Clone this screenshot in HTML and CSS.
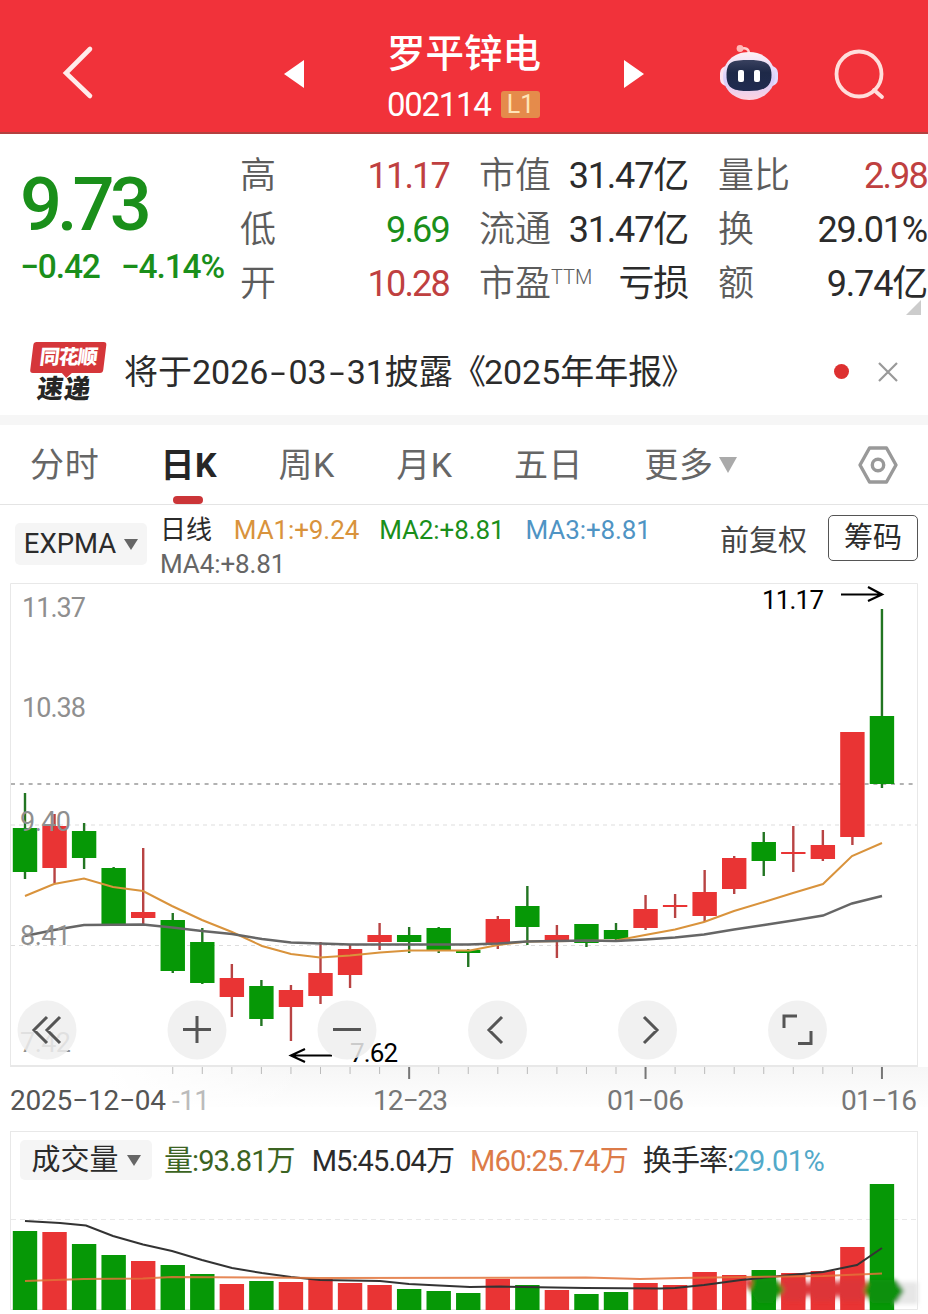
FILE: index.html
```html
<!DOCTYPE html>
<html lang="zh-CN">
<head>
<meta charset="utf-8">
<title>罗平锌电 002114</title>
<link rel="stylesheet" href="styles.css">
</head>
<body>
<header class="topbar">
  <svg class="back" width="34" height="56" viewBox="0 0 34 56"><path d="M30 4 6 28 30 51" fill="none" stroke="#ffeceb" stroke-width="4.6" stroke-linecap="round" stroke-linejoin="miter"/></svg>
  <svg class="prev" width="20" height="30" viewBox="0 0 20 30"><path d="M20 1V29L0 15Z" fill="#fff"/></svg>
  <div class="stock">
    <h1 class="stock-name">罗平锌电</h1>
    <div class="stock-code"><span class="code">002114</span><span class="level">L1</span></div>
  </div>
  <svg class="next" width="20" height="30" viewBox="0 0 20 30"><path d="M0 1V29L20 15Z" fill="#fff"/></svg>
  <svg class="robot" width="60" height="56" viewBox="0 0 60 56">
    <defs><linearGradient id="shell" x2="0" y2="1"><stop offset="0" stop-color="#fff0f4"/><stop offset=".6" stop-color="#d8cdfb"/><stop offset="1" stop-color="#ffd3df"/></linearGradient>
    <linearGradient id="visor" x2="0" y2="1"><stop offset="0" stop-color="#39415f"/><stop offset=".4" stop-color="#1e2948"/><stop offset="1" stop-color="#202b50"/></linearGradient></defs>
    <path d="M30 10C30 5 27 3 21 5" fill="none" stroke="#ffd0cf" stroke-width="2.4"/><circle cx="21" cy="4.500" r="3.400" fill="#ffb9b8"/>
    <rect x="1" y="22" width="14" height="20" rx="7" fill="#fbe3f0"/><rect x="45" y="22" width="14" height="20" rx="7" fill="#e2dcff"/>
    <path d="M30 8C46 8 56 19 56 32S45 56 30 56 4 45 4 32 14 8 30 8Z" fill="url(#shell)"/>
    <path d="M30 16C46 16 52.500 19 52.500 31S45 47 30 47 7.500 45 7.500 31 14 16 30 16Z" fill="url(#visor)"/>
    <rect x="19" y="26" width="6" height="12" rx="2" fill="#fff"/><rect x="35" y="26" width="6" height="12" rx="2" fill="#fff"/>
  </svg>
  <svg class="search" width="52" height="52" viewBox="0 0 52 52"><g fill="none" stroke="#ffdedb" stroke-width="3.8" stroke-linecap="round"><circle cx="25" cy="25" r="22.5"/><path d="M40 41 48 48"/></g></svg>
</header>

<section class="quote">
  <div class="price-box">
    <div class="price">9.73</div>
    <div class="change"><span>−0.42</span><span class="pct">−4.14%</span></div>
  </div>
  <dl class="stats">
    <div><dt>高</dt><dd class="up">11.17</dd></div>
    <div><dt>低</dt><dd class="down">9.69</dd></div>
    <div><dt>开</dt><dd class="up">10.28</dd></div>
  </dl>
  <dl class="stats">
    <div><dt>市值</dt><dd>31.47亿</dd></div>
    <div><dt>流通</dt><dd>31.47亿</dd></div>
    <div><dt>市盈<small>TTM</small></dt><dd>亏损</dd></div>
  </dl>
  <dl class="stats">
    <div><dt>量比</dt><dd class="up">2.98</dd></div>
    <div><dt>换</dt><dd>29.01%</dd></div>
    <div><dt>额</dt><dd>9.74亿</dd></div>
  </dl>
  <i class="corner"></i>
</section>

<section class="news">
  <div class="news-logo"><span class="logo-top">同花顺</span><span class="logo-bottom">速递</span></div>
  <p class="news-text">将于2026<i class="dash">-</i>03<i class="dash">-</i>31披露<span class="title-mark">《</span>2025年年报<span class="title-mark">》</span></p>
  <i class="news-dot"></i>
  <svg class="news-close" width="22" height="22" viewBox="0 0 22 22"><path d="M2 2 20 20M20 2 2 20" stroke="#999" stroke-width="2.2"/></svg>
</section>

<nav class="tabs">
  <a>分时</a><a class="active">日K</a><a>周K</a><a>月K</a><a>五日</a><a>更多<svg width="18" height="16" viewBox="0 0 18 16"><path d="M0 0H18L9 16Z" fill="#aaa"/></svg></a>
  <svg class="gear" width="40" height="40" viewBox="0 0 40 40"><g fill="none" stroke="#999" stroke-width="3.4" stroke-linejoin="round"><path d="M11.5 3H28.5L38 20 28.5 37H11.5L2 20Z"/><circle cx="20" cy="20" r="5.7"/></g></svg>
</nav>

<section class="indicator">
  <button class="pick">EXPMA<i class="caret"></i></button>
  <div class="ma">
    <div class="ma-row"><span class="line-name">日线</span><span class="ma1">MA1:+9.24</span><span class="ma2">MA2:+8.81</span><span class="ma3">MA3:+8.81</span></div>
    <div class="ma-row ma4">MA4:+8.81</div>
  </div>
  <span class="adjust">前复权</span>
  <button class="chips">筹码</button>
</section>

<svg class="kline" width="928" height="548" viewBox="0 583 928 548">
  <defs><linearGradient id="fade" x2="0" y2="1"><stop offset="0" stop-color="#f6f6f6"/><stop offset="1" stop-color="#fefefe"/></linearGradient>
  <linearGradient id="fade-in"><stop offset="0" stop-color="#fff"/><stop offset="1" stop-color="#fff" stop-opacity="0"/></linearGradient></defs>
  <rect x="110" y="1067" width="818" height="40" fill="url(#fade)"/>
  <rect x="108" y="1067" width="200" height="42" fill="url(#fade-in)"/>
  <g class="frame"><path d="M10.500 1066V583.500H917.500V1066"/><path d="M10 1066H918" stroke-width="2"/></g>
  <g class="grid"><path d="M11 825H917M11 945.500H917"/></g>
  <path d="M11 784H917" stroke="#999" stroke-width="1.500" stroke-dasharray="4 4.800"/>
  <g id="candles"></g>
  <polyline fill="none" stroke="#d9933c" stroke-width="2" points="25,896 54,884 84,878.500 113,887 143,891 172,906 202,920 232,932 262,946 291,954 320,957.500 350,955.500 380,952.500 409,950.500 470,950.500 498,945 527,941.500 616,940.500 645,935 675,929.500 704,922 734,911 764,902 793,893 823,884 852,856 882,843"/>
  <polyline fill="none" stroke="#666" stroke-width="2.400" points="25,936 54,930 84,925 143,924.500 172,927.500 202,931 232,934 262,939 291,942.500 320,943.500 350,944.500 468,944.500 498,943.500 527,941.500 586,940.500 616,941 645,939.500 675,937.500 704,934.500 734,929.500 764,925 793,920.500 823,915.500 852,903.500 882,896"/>
  <g class="scale">
    <text x="22" y="617" textLength="64">11.37</text><text x="22" y="717" textLength="64">10.38</text>
    <text x="20" y="831" textLength="51">9.40</text><text x="20" y="945" textLength="51">8.41</text>
    <text x="20" y="1052" textLength="51">7.42</text>
  </g>
  <g class="marks">
    <text x="762" y="609" textLength="62">11.17</text><text x="350" y="1062" textLength="48">7.62</text>
    <path d="M841 594.500H882M868 587 882 594.500 868 601M332 1055.500H291M305 1049 291 1055.500 305 1062"/>
  </g>
  <g class="controls">
    <circle cx="47" cy="1030" r="29.500"/><circle cx="197" cy="1030" r="29.500"/><circle cx="347" cy="1030" r="29.500"/><circle cx="497.500" cy="1030" r="29.500"/><circle cx="647.500" cy="1030" r="29.500"/><circle cx="797.500" cy="1030" r="29.500"/>
    <path d="M47 1017 34 1030 47 1043M60 1017 47 1030 60 1043M183 1029.500H211M197 1016V1043M333 1029.500H361M502 1017 489 1030 502 1043M644 1017 657 1030 644 1043M784 1028V1016H797M811 1031V1043.500H798"/>
  </g>
  <g id="ticks"></g>
  <g class="dates">
    <text x="10" y="1110" textLength="156" fill="#555">2025−12−04</text><text x="172" y="1110" textLength="38" fill="#bbb">-11</text>
    <text x="373" y="1110" textLength="75">12−23</text><text x="607" y="1110" textLength="77">01−06</text><text x="841" y="1110" textLength="76">01−16</text>
  </g>
</svg>

<section class="volume">
  <div class="vol-head">
    <button class="pick vol-pick">成交量<i class="caret"></i></button>
    <span class="v1">量:93.81万</span><span class="v5">M5:45.04万</span><span class="v60">M60:25.74万</span><span class="turn">换手率:<b>29.01%</b></span>
  </div>
  <svg class="bars" width="928" height="131" viewBox="0 1183 928 131">
    <defs><filter id="soft" x="-10%" y="-30%" width="120%" height="160%"><feGaussianBlur stdDeviation="2"/></filter></defs>
    <path d="M10.500 1183V1309.500H917.500V1183" fill="none" stroke="#e8e8e8"/>
    <path d="M11 1219.500H917" stroke="#e8e8e8" stroke-dasharray="5 4"/>
    <g id="vols"></g>
    <g filter="url(#soft)">
      <path d="M895 1282H918V1304H895Z" fill="#e6e6e6"/>
      <g fill="#dd3639"><path d="M744 1279H758L748 1291Z"/><path d="M784 1279H804L812 1290 802 1301H786L776 1290Z"/><path d="M812 1279H834L842 1290 832 1301H814L806 1290Z"/><path d="M840 1279H864L870 1290 862 1301H842L835 1290Z"/></g>
      <path d="M753 1279H776L784 1290 772 1303H758L750 1290Z" fill="#109010"/>
      <path d="M869 1280H896L904 1291 896 1303H872L864 1291Z" fill="#109010"/>
    </g>
    <polyline fill="none" stroke="#333" stroke-width="2" points="25,1221 60,1223 86,1225.500 113,1236 143,1244.500 172,1251 202,1260 232,1268 262,1273 291,1277 320,1280 380,1281 409,1284 439,1285.500 470,1287 500,1286.500 586,1288 660,1288.500 675,1288 704,1285 741,1280 780,1276 823,1272 852,1266 857,1265 882,1248"/>
    <polyline fill="none" stroke="#e2733a" stroke-opacity=".85" stroke-width="2" points="25,1281 84,1279 143,1278.500 172,1277 320,1278 586,1277.500 640,1279 680,1278 823,1276 882,1273.500"/>
  </svg>
</section>
<script src="chart.js"></script>
</body>
</html>
```
FILE: styles.css
```css
* { box-sizing: border-box; }
body { margin: 0; width: 928px; height: 1314px; overflow: hidden; background: #fff; color: #2b2b2b; font-family: Roboto, "Noto Sans CJK SC", sans-serif; }
svg { display: block; flex: none; }
h1, dl, dd, p { margin: 0; }
i { font-style: normal; }
button { border: 0; padding: 0; font: inherit; color: inherit; }

.topbar { height: 134px; display: flex; align-items: flex-start; background: #f1323a; border-bottom: 2px solid #b34140; color: #fff; }
.back { margin: 45px 0 0 60px; }
.prev { margin: 59px 0 0 190px; }
.stock { width: 157px; margin: 29px 0 0 83px; }
.stock-name { font-size: 38.5px; font-weight: 500; line-height: 50px; white-space: nowrap; }
.stock-code { display: flex; align-items: center; height: 50px; }
.code { width: 105px; padding-top: 2px; font-size: 33px; letter-spacing: -1.3px; line-height: 50px; }
.level { width: 39px; height: 27px; margin-left: 9px; border-radius: 3px; background: #e58b4b; color: #ffe4b8; font-size: 25px; line-height: 28px; text-align: center; }
.next { margin: 59px 0 0 80px; }
.robot { margin: 44px 0 0 75px; }
.search { margin: 49px 0 0 55px; }

.quote { position: relative; height: 194px; padding: 15px 0 0 20px; display: flex; }
.price-box { width: 220px; color: #1a8f1a; }
.price { margin-top: 16px; font-size: 74px; font-weight: 500; line-height: 80px; letter-spacing: -5px; }
.change { display: flex; font-size: 33.5px; font-weight: 500; line-height: 44px; letter-spacing: -1.1px; white-space: nowrap; }
.pct { margin-left: 21px; }
.stats { width: 209px; margin-right: 30px; }
.stats:last-of-type { margin-right: 0; }
.stats > div { height: 54px; display: flex; justify-content: space-between; line-height: 54px; white-space: nowrap; }
.stats dt { font-size: 36px; font-weight: 350; color: #5c5c5c; }
.stats small { font-size: 20px; line-height: 1; position: relative; top: -12px; }
.stats dd { font-size: 36px; letter-spacing: -1.2px; }
.stats .up, .stats .down { letter-spacing: -1.8px; }
.stats .up { color: #bf4040; }
.stats .down { color: #1a8f1a; }
.corner { position: absolute; right: 7px; bottom: 13px; border-left: 15px solid transparent; border-bottom: 15px solid #ccc; }

.news { height: 87px; display: flex; align-items: center; padding-left: 30px; }
.news-logo { width: 73px; height: 60px; transform: skewX(-7deg); font-weight: 900; text-align: center; }
.logo-top { position: relative; display: block; height: 31px; background: #d5363a; border-radius: 3px; color: #fff; font-size: 20px; line-height: 31px; letter-spacing: -1px; }
.logo-top::after { content: ""; position: absolute; left: 32px; top: 31px; border: 5px solid transparent; border-top-color: #d5363a; border-bottom: 0; }
.logo-bottom { display: block; color: #262626; font-size: 26px; line-height: 32px; letter-spacing: 1px; }
.news-text { width: 711px; padding-left: 21px; font-size: 34px; line-height: 50px; white-space: nowrap; }
.dash { display: inline-block; width: 20px; text-align: center; transform: scaleX(1.6); }
.title-mark { letter-spacing: -2px; margin-left: -1px; }
.news-dot { width: 15px; height: 15px; margin-left: 20px; border-radius: 50%; background: #dd3030; }
.news-close { margin-left: 28px; }

.tabs { height: 90px; border-top: 10px solid #f6f6f6; border-bottom: 1px solid #e4e4e4; display: flex; align-items: center; padding-left: 30px; font-size: 34px; letter-spacing: .7px; color: #666; }
.tabs a { position: relative; display: flex; align-items: center; height: 79px; padding-top: 2px; margin-right: 61px; line-height: 77px; white-space: nowrap; }
.tabs a svg { margin-left: 5px; margin-top: -2px; }
.tabs .active { font-weight: 700; color: #262626; }
.active::after { content: ""; position: absolute; left: 13px; bottom: 0; width: 30px; height: 8px; border-radius: 4px; background: #cb3538; }
.tabs .gear { margin-left: 60px; }

.indicator { height: 78px; display: flex; padding-left: 15px; }
.pick { width: 132px; height: 42px; margin-top: 18px; display: flex; align-items: center; justify-content: center; gap: 8px; border-radius: 5px; background: #f5f5f5; font-size: 27.5px; line-height: 44px; white-space: nowrap; }
.caret { border: 7.5px solid transparent; border-top: 11px solid #666; border-bottom: 0; }
.ma { width: 560px; margin: 8px 0 0 13px; font-size: 26px; line-height: 34px; }
.ma-row { display: flex; white-space: nowrap; letter-spacing: -.1px; }
.ma1 { margin-left: 22px; color: #d9933c; }
.ma2 { margin-left: 20px; color: #1a8f1a; }
.ma3 { margin-left: 21px; color: #4f94c4; }
.ma4 { color: #666; }
.adjust { width: 108px; margin-top: 11px; font-size: 29px; line-height: 50px; color: #444; }
.chips { width: 90px; height: 46px; margin-top: 10px; border: 1.5px solid #555; border-radius: 5px; background: #fff; font-size: 29px; line-height: 45px; }

.frame { fill: none; stroke: #e8e8e8; }
.grid { stroke: #ddd; stroke-dasharray: 4 4; }
.scale { font-size: 27px; fill: #8f8f8f; }
.marks { font-size: 26px; fill: #000; }
.marks path { fill: none; stroke: #000; stroke-width: 2.2; }
.controls circle { fill: #efefef; fill-opacity: .85; }
.controls path { fill: none; stroke: #555; stroke-width: 3; }
.dates { font-size: 28px; fill: #777; }

.volume { height: 183px; }
.vol-head { height: 52px; display: flex; margin: 0 10px; padding-left: 9px; border: 1px solid #e8e8e8; border-bottom: 0; font-size: 29px; line-height: 59px; letter-spacing: -.9px; white-space: nowrap; }
.vol-pick { height: 40px; margin-top: 8px; font-size: 29px; line-height: 42px; letter-spacing: 0; }
.v1 { margin-left: 12px; color: #3c6422; }
.v5 { margin-left: 17px; }
.v60 { margin-left: 16px; color: #dc7b48; }
.turn { margin-left: 15px; }
.turn b { font-weight: 400; letter-spacing: -.5px; color: #52a9c9; }
```
FILE: chart.js
```js
const UP = "#e93434", DOWN = "#069806", STEP = 29.55;
const x = i => 25 + STEP * i;
// colour, body top, body bottom, high, low, volume top
const days = [
  ["g",828,872,793,879,1231],["r",826,868,814,883,1232],["g",831,858,823,869,1244],["g",868,924,867,925,1255],
  ["r",912,918,848,924,1261],["g",920,971,913,973,1265],["g",942,983,928,984,1274],["r",978,997,964,1017,1284],
  ["g",986,1019,980,1026,1281],["r",990,1007,985,1041,1282],["r",973,996,942,1004,1279],["r",949,975,945,988,1283],
  ["r",935,942,923,950,1285],["g",935,942,927,953,1289],["g",928,950,927,953,1291],["g",950,953,949,967,1293],
  ["r",919,944,916,949,1279],["g",906,927,886,945,1285],["r",935,941,925,958,1290],["g",924,943,924,947,1294],
  ["g",930,939,923,940,1292],["r",909,928,895,930,1283],["r",905,907,894,918,1285],["r",892,916,870,922,1272],
  ["r",858,889,856,894,1275],["g",842,861,832,876,1270],["r",852,854,826,872,1273],["r",845,859,830,861,1271],
  ["r",732,837,732,845,1247],["g",716,784,609,788,1184]
];
const rect = (cx, w, top, bottom, fill) =>
  `<rect x="${cx - w / 2}" y="${top}" width="${w}" height="${bottom - top}" fill="${fill}"/>`;
let candles = "", vols = "", ticks = "";
days.forEach(([c, t, b, h, l, v], i) => {
  const fill = c === "r" ? UP : DOWN;
  candles += rect(x(i), 2.4, h, l, c === "r" ? "#b84343" : "#227522") + rect(x(i), 24.4, t, b, fill);
  vols += rect(x(i), 24.4, v, 1310, fill);
  if (i > 4) {
    const major = i === 13 || i === 21 || i === 29;
    ticks += rect(x(i), major ? 2 : 1, 1067, major ? 1079 : 1074, major ? "#777" : "#bbb");
  }
});
document.getElementById("candles").innerHTML = candles;
document.getElementById("vols").innerHTML = vols;
document.getElementById("ticks").innerHTML = ticks;
```
